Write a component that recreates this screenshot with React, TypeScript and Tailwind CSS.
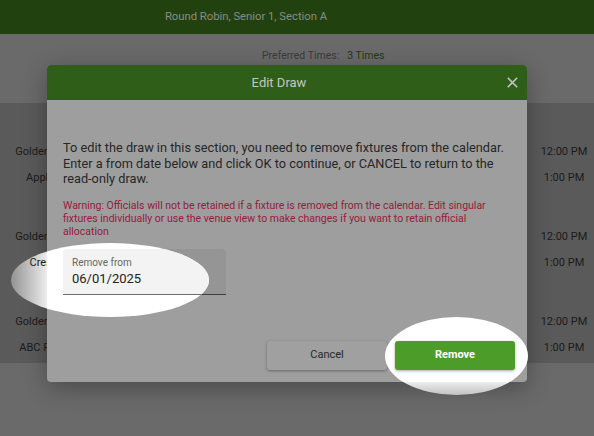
import React from "react";

const fixtures = [
  { home: "Golden Bears FC", away: "Apple Valley" },
  { home: "Golden Bears FC", away: "Crestwood" },
  { home: "Golden Bears FC", away: "ABC Rovers FC" },
];

const CloseIcon = () => (
  <svg width="11" height="11" viewBox="0 0 11 11" fill="none">
    <path d="M0.8 0.8 L10.2 10.2 M10.2 0.8 L0.8 10.2" stroke="#c2c2c2" strokeWidth="1.6" />
  </svg>
);

// the date field, drawn twice: once dimmed under the overlay, once bright inside the spotlight
const DateField = ({ bright }: { bright: boolean }) => (
  <div
    className={
      bright
        ? "w-[163px] h-[46px] rounded-t-[4px] bg-[#f3f3f3] border-b border-[#6e6e6e] pl-[9px] pt-[8px]"
        : "w-[163px] h-[46px] rounded-t-[4px] bg-[#959595] border-b border-[#3f3f3f] pl-[9px] pt-[8px]"
    }
  >
    <div className={bright ? "text-[10px] leading-[12px] text-[#666]" : "text-[10px] leading-[12px] text-[#3e3e3e]"}>
      Remove from
    </div>
    <div className={bright ? "mt-[2px] text-[13px] leading-[16px] text-[#222]" : "mt-[2px] text-[13px] leading-[16px] text-[#161616]"}>
      06/01/2025
    </div>
  </div>
);

const FixtureRows = () => (
  <div className="flex flex-col gap-[33px] pt-[36px]">
    {fixtures.map((f, i) => (
      <div key={i} className="flex flex-col text-[11px] text-[#1b1b1b]">
        <div className="flex h-[26px] items-center">
          <div className="w-[112px] text-center whitespace-nowrap">{f.home}</div>
          <div className="flex-1" />
          <div className="w-[60px] text-center">12:00 PM</div>
        </div>
        <div className="flex h-[26px] items-center">
          <div className="w-[112px] text-center whitespace-nowrap">{f.away}</div>
          <div className="flex-1" />
          <div className="w-[60px] text-center">1:00 PM</div>
        </div>
      </div>
    ))}
  </div>
);

export default function App() {
  return (
    <div className="relative w-[594px] h-[436px] overflow-hidden bg-[#6a6a6a] font-['Roboto',sans-serif]">
      {/* page behind the dialog, already dimmed */}
      <header className="h-[34px] bg-[#21410e] flex items-center justify-center pr-[102px] text-[11.25px] text-[#8b8b8b]">
        Round Robin, Senior 1, Section A
      </header>
      <div className="h-[69px] pl-[262px] pt-[15px] flex items-start text-[10.5px] leading-[14px]">
        <span className="text-[#3b3b3b]">Preferred Times:</span>
        <span className="ml-[8px] text-[#1f3a12]">3 Times</span>
      </div>
      <div className="h-[260px] bg-[#5a5a5a]">
        <FixtureRows />
      </div>

      {/* dialog */}
      <div className="absolute left-[47px] top-[65px] w-[480px] h-[317px] rounded-[4px] overflow-hidden bg-[#9e9e9e] shadow-[0_6px_24px_rgba(0,0,0,0.3)] flex flex-col">
        <div className="relative h-[35px] shrink-0 bg-[#2e5e17] flex items-center pr-[16px]">
          <div className="flex-1 text-center text-[13px] text-[#c6c6c6]">Edit Draw</div>
          <button className="absolute left-[460px] top-[12px] w-[11px] h-[11px]">
            <CloseIcon />
          </button>
        </div>
        <div className="flex-1 flex flex-col pl-[16px] pr-[12px] pt-[40px] pb-[12px]">
          <p className="text-[12.75px] leading-[15.5px] text-[#262626]">
            To edit the draw in this section, you need to remove fixtures from the calendar. Enter a from date below and click OK to continue, or CANCEL to return to the read-only draw.
          </p>
          <p className="mt-[12px] pr-[10px] text-[10.5px] leading-[13px] text-[#971a3b]">
            Warning: Officials will not be retained if a fixture is removed from the calendar. Edit singular fixtures individually or use the venue view to make changes if you want to retain official allocation
          </p>
          <div className="mt-[11.5px]">
            <DateField bright={false} />
          </div>
          <div className="flex-1" />
          <div className="flex justify-end gap-[8px]">
            <button className="w-[120px] h-[29px] rounded-[3px] bg-[#a0a0a0] shadow-[0_1px_3px_rgba(0,0,0,0.35)] text-[11px] text-[#262626]">
              Cancel
            </button>
            <button className="w-[120px] h-[29px] rounded-[3px] bg-[#2f6119] text-[11px] font-bold text-[#9e9e9e]">
              Remove
            </button>
          </div>
        </div>
      </div>

      {/* spotlight on the date field */}
      <div className="absolute left-[11px] top-[243px] w-[198px] h-[74px] rounded-[50%] overflow-hidden bg-[linear-gradient(to_right,#939393_0%,#ececec_18%,#ffffff_18.3%)]">
        <div className="absolute left-0 top-[7px] w-[36px] h-[26px] overflow-hidden">
          <div className="absolute left-[-11px] top-0 w-[112px] h-[26px] flex items-center justify-center whitespace-nowrap text-[11px] text-[#1b1b1b]">
            Crestwood
          </div>
        </div>
        <div className="absolute left-[52px] top-[6px]">
          <DateField bright />
        </div>
      </div>

      {/* spotlight on the Remove button */}
      <div className="absolute left-[385px] top-[317px] w-[143px] h-[78px] rounded-[50%] overflow-hidden bg-[linear-gradient(to_bottom,#ffffff_0%,#ffffff_83%,#ececec_83.5%,#c2c2c2_100%)]">
        <button className="absolute left-[10px] top-[24px] w-[120px] h-[29px] rounded-[3px] bg-[#4c9c29] shadow-[0_1px_3px_rgba(0,0,0,0.35)] text-[11px] font-bold text-white">
          Remove
        </button>
      </div>
    </div>
  );
}
